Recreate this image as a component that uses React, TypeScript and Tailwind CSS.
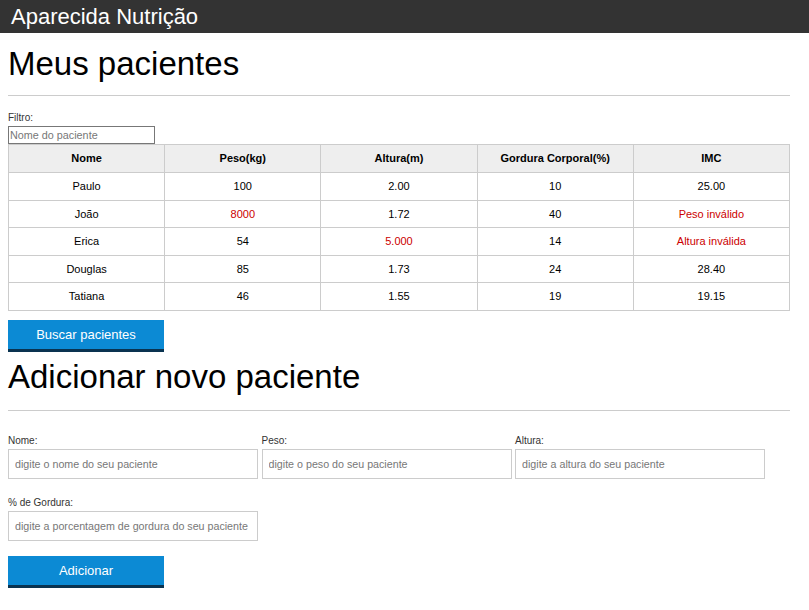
const pacientes = [
  { nome: "Paulo", peso: "100", altura: "2.00", gordura: "10", imc: "25.00" },
  { nome: "João", peso: "8000", altura: "1.72", gordura: "40", imc: "Peso inválido", pesoErro: true, imcErro: true },
  { nome: "Erica", peso: "54", altura: "5.000", gordura: "14", imc: "Altura inválida", alturaErro: true, imcErro: true },
  { nome: "Douglas", peso: "85", altura: "1.73", gordura: "24", imc: "28.40" },
  { nome: "Tatiana", peso: "46", altura: "1.55", gordura: "19", imc: "19.15" },
]

const cols = ["Nome", "Peso(kg)", "Altura(m)", "Gordura Corporal(%)", "IMC"]

function Campo({ label, placeholder }: { label: string; placeholder: string }) {
  return (
    <div className="flex flex-col w-[250px]">
      <label className="text-[10px] leading-[12px] text-[#333]">{label}</label>
      <input
        placeholder={placeholder}
        className="mt-[2px] h-[30px] w-[250px] border border-[#ccc] pl-[6px] pr-[2px] text-[10.7px] outline-none placeholder:text-[#777]"
      />
    </div>
  )
}

export default function App() {
  return (
    <div className="min-h-screen bg-white font-['Liberation_Sans',Arial,sans-serif] text-black">
      {/* topo */}
      <header className="h-[33px] bg-[#333] px-[11px]">
        <h1 className="text-[22px] leading-[33px] text-white">Aparecida Nutrição</h1>
      </header>

      <main className="w-[798px] px-2">
        <section>
          <h2 className="mt-[12px] text-[33px] leading-[37px]">Meus pacientes</h2>
          <hr className="mt-[13px] w-[782px] border-t border-[#ccc]" />

          <label className="mt-[16px] block text-[10px] leading-[12px] text-[#333]">Filtro:</label>
          <input
            placeholder="Nome do paciente"
            className="mt-[2px] block h-[18px] w-[147px] border border-[#777] px-[1px] text-[10.8px] outline-none placeholder:text-[#777]"
          />

          <table className="w-[782px] table-fixed border-collapse text-[11px]">
            <thead>
              <tr className="h-[28px] bg-[#eee]">
                {cols.map((c) => (
                  <th key={c} className="border border-[#ccc] font-bold">
                    {c}
                  </th>
                ))}
              </tr>
            </thead>
            <tbody>
              {pacientes.map((p) => (
                <tr key={p.nome} className="h-[27.6px] text-center">
                  <td className="border border-[#ccc]">{p.nome}</td>
                  <td className={`border border-[#ccc] ${p.pesoErro ? "text-[#c00]" : ""}`}>{p.peso}</td>
                  <td className={`border border-[#ccc] ${p.alturaErro ? "text-[#c00]" : ""}`}>{p.altura}</td>
                  <td className="border border-[#ccc]">{p.gordura}</td>
                  <td className={`border border-[#ccc] ${p.imcErro ? "text-[#c00]" : ""}`}>{p.imc}</td>
                </tr>
              ))}
            </tbody>
          </table>

          <button className="mt-[9px] block h-[32px] w-[156px] border-b-[3px] border-[#0a3350] bg-[#0c8ad4] text-[13px] text-white">
            Buscar pacientes
          </button>
        </section>

        <section>
          <h2 className="mt-[6px] text-[33px] leading-[37px]">Adicionar novo paciente</h2>
          <hr className="mt-[15px] w-[782px] border-t border-[#ccc]" />

          <form className="mt-[24px]" onSubmit={(e) => e.preventDefault()}>
            <div className="flex gap-[3.5px]">
              <Campo label="Nome:" placeholder="digite o nome do seu paciente" />
              <Campo label="Peso:" placeholder="digite o peso do seu paciente" />
              <Campo label="Altura:" placeholder="digite a altura do seu paciente" />
            </div>
            <div className="mt-[18px] flex">
              <Campo label="% de Gordura:" placeholder="digite a porcentagem de gordura do seu paciente" />
            </div>
            <button className="mt-[15px] block h-[32px] w-[156px] border-b-[3px] border-[#0a3350] bg-[#0c8ad4] text-[13px] text-white">
              Adicionar
            </button>
          </form>
        </section>
      </main>
    </div>
  )
}
